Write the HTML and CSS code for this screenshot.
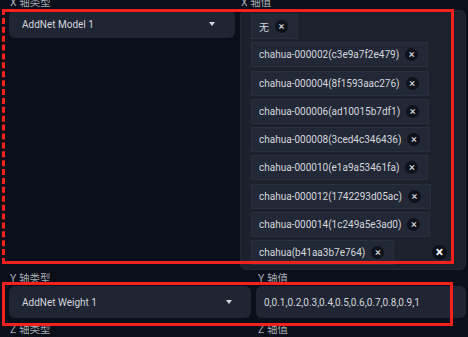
FILE: index.html
```html
<!DOCTYPE html>
<html lang="zh">
<head>
    <meta charset="UTF-8">
    <meta name="viewport" content="width=device-width, initial-scale=1.0">
    <title>XYZ Plot</title>
    <link rel="stylesheet" href="styles.css">
</head>
<body>
    <div class="page">
        <!-- X axis -->
        <div class="row row-x">
            <div class="field">
                <div class="label">X 轴类型</div>
                <div class="dropdown dropdown-x">
                    <span>AddNet Model 1</span>
                    <span class="caret"></span>
                </div>
            </div>
            <div class="field">
                <div class="label">X 轴值</div>
                <div class="multiselect">
                    <div class="chip"><span>无</span><span class="chip-x">&times;</span></div>
                    <div class="chip"><span>chahua-000002(c3e9a7f2e479)</span><span class="chip-x">&times;</span></div>
                    <div class="chip"><span>chahua-000004(8f1593aac276)</span><span class="chip-x">&times;</span></div>
                    <div class="chip"><span>chahua-000006(ad10015b7df1)</span><span class="chip-x">&times;</span></div>
                    <div class="chip"><span>chahua-000008(3ced4c346436)</span><span class="chip-x">&times;</span></div>
                    <div class="chip"><span>chahua-000010(e1a9a53461fa)</span><span class="chip-x">&times;</span></div>
                    <div class="chip"><span>chahua-000012(1742293d05ac)</span><span class="chip-x">&times;</span></div>
                    <div class="chip"><span>chahua-000014(1c249a5e3ad0)</span><span class="chip-x">&times;</span></div>
                    <div class="chip"><span>chahua(b41aa3b7e764)</span><span class="chip-x">&times;</span></div>
                    <div class="clear-all">
                        <span class="clear-x">&times;</span>
                        <span class="mini-caret"></span>
                    </div>
                </div>
            </div>
        </div>

        <!-- Y axis -->
        <div class="row row-y">
            <div class="field">
                <div class="label">Y 轴类型</div>
                <div class="dropdown">
                    <span>AddNet Weight 1</span>
                    <span class="caret"></span>
                </div>
            </div>
            <div class="field">
                <div class="label">Y 轴值</div>
                <div class="textbox">0,0.1,0.2,0.3,0.4,0.5,0.6,0.7,0.8,0.9,1</div>
            </div>
        </div>

        <!-- Z axis -->
        <div class="row row-y">
            <div class="field">
                <div class="label">Z 轴类型</div>
                <div class="dropdown"></div>
            </div>
            <div class="field">
                <div class="label">Z 轴值</div>
                <div class="textbox"></div>
            </div>
        </div>
    </div>

    <!-- annotation boxes -->
    <div class="mark mark-x"></div>
    <div class="mark mark-y"></div>
</body>
</html>
```

FILE: styles.css
```css
/* Global */
body {
    margin: 0;
    background-color: #0b0f19;
    color: #d4d7dd;
    font-family: Roboto, "Noto Sans CJK SC", sans-serif;
    overflow: hidden;
}

.page {
    padding: 0 2px 0 9px;
    margin-top: -4px;
}

.row {
    display: grid;
    column-gap: 5px;
    align-items: start;
}

.row-x {
    grid-template-columns: 226px 226px;
}

.row-y {
    grid-template-columns: 242px 210px;
    margin-top: 2px;
}

.row-y + .row-y {
    margin-top: 5px;
}

.label {
    font-size: 10.5px;
    line-height: 13px;
    color: #a4a9b3;
    padding-left: 1px;
    margin-bottom: 1px;
}

.row-y .field + .field .label {
    padding-left: 2px;
}

/* Dropdowns */
.dropdown {
    height: 32px;
    background-color: #1f2532;
    border-radius: 6px;
    display: flex;
    align-items: center;
    justify-content: space-between;
    padding: 0 19px 0 13px;
    font-size: 10px;
    color: #d4d7dd;
}

.dropdown-x {
    height: 28px;
    padding-right: 20px;
}

.caret {
    width: 0;
    height: 0;
    border-left: 3.5px solid transparent;
    border-right: 3.5px solid transparent;
    border-top: 4px solid #d4d7dd;
}

/* Multiselect */
.multiselect {
    height: 260px;
    box-sizing: border-box;
    background-color: #1c212c;
    border: 1px solid #222836;
    border-radius: 6px;
    padding: 3px 8px 0 10px;
    display: flex;
    flex-wrap: wrap;
    align-content: flex-start;
    row-gap: 3.25px;
    column-gap: 4px;
}

.chip {
    height: 25px;
    box-sizing: border-box;
    background-color: #222835;
    border: 1px solid #283040;
    display: flex;
    align-items: center;
    gap: 6px;
    padding: 0 9px 0 7px;
    font-size: 10px;
    color: #d4d7dd;
}

.chip-x {
    width: 13px;
    height: 13px;
    border-radius: 50%;
    background-color: #0e121b;
    color: #e6e8ec;
    font-size: 11px;
    line-height: 13px;
    text-align: center;
}

.clear-all {
    margin-left: auto;
    height: 25px;
    display: flex;
    align-items: center;
    gap: 4px;
    padding-right: 4px;
}

.clear-x {
    width: 15px;
    height: 15px;
    border-radius: 50%;
    background-color: #0c1018;
    color: #f0f1f3;
    font-size: 14px;
    font-weight: bold;
    line-height: 15px;
    text-align: center;
}

.mini-caret {
    width: 2px;
    height: 2px;
    background-color: #9aa0aa;
    border-radius: 50%;
}

/* Textbox */
.textbox {
    height: 32px;
    box-sizing: border-box;
    background-color: #1f2532;
    border-radius: 6px;
    padding: 0 8px;
    display: flex;
    align-items: center;
    font-size: 10px;
    color: #d4d7dd;
}

/* Red annotation frames */
.mark {
    position: absolute;
    border: 3px solid #f5211f;
    box-sizing: border-box;
}

.mark-x {
    left: 2px;
    top: 9px;
    width: 452px;
    height: 255px;
    border-left-style: dashed;
}

.mark-y {
    left: 2px;
    top: 282px;
    width: 451px;
    height: 44px;
}
```
